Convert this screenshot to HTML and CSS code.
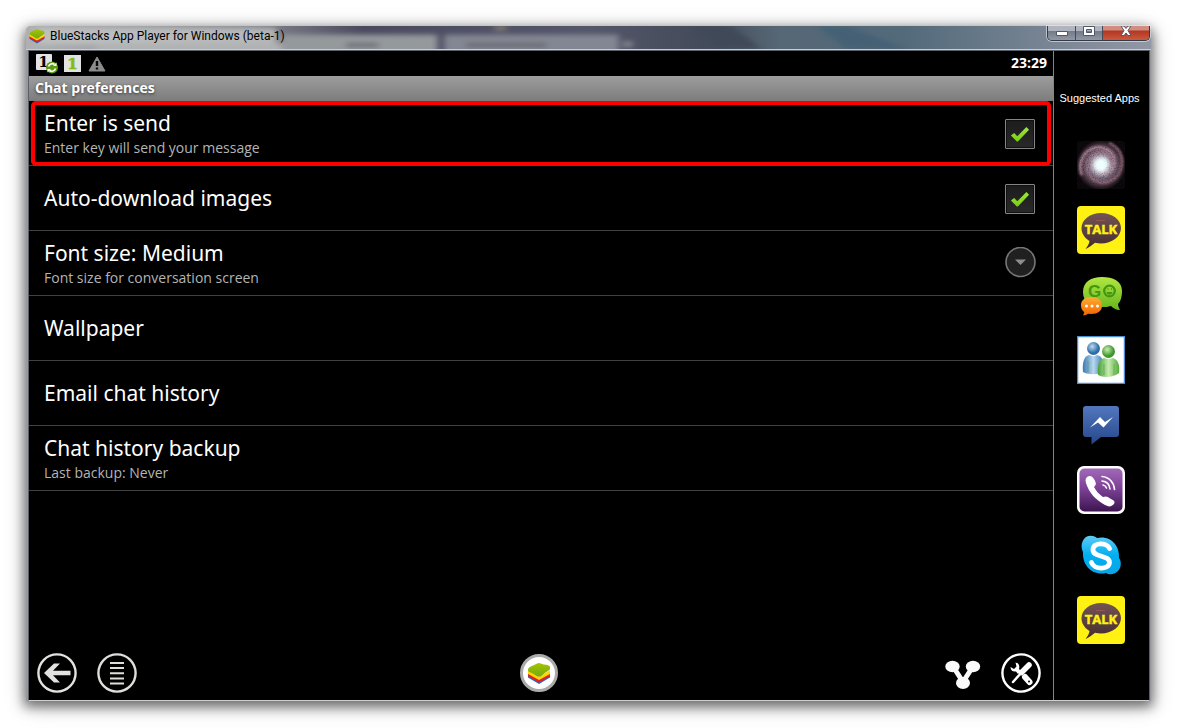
FILE: index.html
```
<!DOCTYPE html>
<html lang="en">
<head>
<meta charset="utf-8">
<title>BlueStacks App Player for Windows (beta-1)</title>
<link rel="stylesheet" href="styles.css">
</head>
<body>
<svg class="defs" aria-hidden="true">
  <defs>
    <linearGradient id="lime" x1="0" y1="0" x2="0" y2="1"><stop offset="0" stop-color="#a5c400"/><stop offset="1" stop-color="#72a912"/></linearGradient>
    <linearGradient id="check" x1="0" y1="0" x2="0" y2="1"><stop offset="0" stop-color="#9be83b"/><stop offset="1" stop-color="#7ccc12"/></linearGradient>
    <linearGradient id="brown" x1="0" y1="0" x2="0" y2="1"><stop offset="0" stop-color="#735454"/><stop offset="1" stop-color="#432c2e"/></linearGradient>
    <symbol id="stack" viewBox="0 0 26 24">
      <path d="M1 14v3l12 7 12-7v-4l-12 7z" fill="#1d70b7"/>
      <path d="M1 11.500v4l12 7 12-7v-4l-12 7z" fill="#e1202b"/>
      <path d="M1 9v4l12 6.500L25 13V9l-12 7z" fill="#ffd500"/>
      <path d="M1 8.500Q1 6.500 3 5.500L11 1.500q2-.8 4 0 3 1.500 6 1.500 3 .5 4 2v3q-2 2-5 3.500l-5 4q-2 1-4 0Q6 12 2 10.500 1 10 1 8.500z" fill="url(#lime)"/>
    </symbol>
    <symbol id="talk" viewBox="0 0 48 48">
      <rect width="48" height="48" rx="4" fill="#fff212"/>
      <path d="M24 7c11 0 20 6.500 20 15s-9 15.500-20 15.500c-2 0-4-.3-6-.7-3 2.500-6 5-9.500 6.200 2-2.500 3.500-5 4-8C7.500 32 4.500 27 4.500 22.500 4.500 13.500 13 7 24 7z" fill="url(#brown)"/>
      <path d="M19 14.500h9" stroke="#965454"/>
      <text x="24" y="28" text-anchor="middle" class="talk-text">TALK</text>
    </symbol>
  </defs>
</svg>

<div class="window">
  <header class="titlebar">
    <svg class="glass" viewBox="0 0 1124 24" preserveAspectRatio="none" aria-hidden="true">
      <defs>
        <filter id="soft" x="-10%" y="-50%" width="120%" height="200%"><feGaussianBlur stdDeviation="3"/></filter>
        <linearGradient id="sky"><stop offset="0" stop-color="#aeb0b1"/><stop offset=".08" stop-color="#a0a2a5"/><stop offset=".2" stop-color="#85878f"/><stop offset=".3" stop-color="#494a5e"/><stop offset=".5" stop-color="#54566a"/><stop offset=".6" stop-color="#444b5a"/><stop offset=".67" stop-color="#566775"/><stop offset=".78" stop-color="#526a7a"/><stop offset=".9" stop-color="#768392"/><stop offset="1" stop-color="#9297a4"/></linearGradient>
      </defs>
      <rect width="1124" height="24" fill="url(#sky)"/>
      <g filter="url(#soft)">
        <rect x="10" y="2" width="240" height="17" fill="#c3c4c4" opacity=".8"/>
        <rect x="70" y="18" width="190" height="12" fill="#b0b2b3"/>
        <rect x="255" y="9" width="156" height="22" fill="#94999c"/>
        <rect x="418" y="9" width="174" height="22" fill="#838793"/>
        <path d="M320 20h32M440 20h80" stroke="#62656d" stroke-width="4"/>
        <path d="M468 2h12" stroke="#857e72" stroke-width="5"/>
        <path d="M596 19h10" stroke="#858891" stroke-width="6"/>
        <path d="M705 0l30 24h-50L670 0z" fill="#414858"/>
        <path d="M820 0l60 24h-60L790 0z" fill="#456074"/>
      </g>
    </svg>
    <svg class="title-logo" aria-hidden="true"><use href="#stack"/></svg>
    <h1 class="title">BlueStacks App Player for Windows (beta-1)</h1>
    <div class="controls">
      <button class="control" aria-label="Minimize"><svg width="12" height="12" viewBox="0 0 12 12"><path d="M.5 5.500h11v4H.5z" fill="#fff" stroke="#51586a"/></svg></button>
      <button class="control" aria-label="Maximize"><svg width="12" height="12" viewBox="0 0 12 12"><path fill-rule="evenodd" d="M.5 .5h11v9H.5zM3.500 3.500v3h5v-3z" fill="#fff" stroke="#51586a"/></svg></button>
      <button class="control control-close" aria-label="Close"><svg width="12" height="12" viewBox="0 0 12 12"><path d="M1 0h3l2 2.500L8 0h3L8 4.500l3 5H8L6 7 4 9.500H1l3-5z" fill="#fff" stroke="#525866"/></svg></button>
    </div>
  </header>

  <div class="content">
    <main class="player">
      <div class="status">
        <svg width="22" height="21" viewBox="0 0 22 21" aria-hidden="true">
          <rect x="0" y="1" width="16" height="16" rx="1" fill="#e2e4e5"/>
          <text x="7.500" y="14" text-anchor="middle" class="badge-one">1</text>
          <circle cx="16" cy="14.500" r="6" fill="#5b9e0f"/>
          <path d="M12.500 13.500a3.800 3.800 0 0 1 6-2M19.500 15.500a3.800 3.800 0 0 1-6 2" fill="none" stroke="#fff" stroke-width="1.600"/>
          <path d="M17 13h3.500V9.500zM15 16h-3.500v3.500z" fill="#fff"/>
        </svg>
        <svg width="17" height="17" viewBox="0 0 17 17" aria-hidden="true">
          <rect width="17" height="17" fill="#e0e3e2"/>
          <text x="8.500" y="14" text-anchor="middle" class="badge-one badge-lime">1</text>
        </svg>
        <svg width="20" height="16" viewBox="-1 0 20 16" aria-hidden="true">
          <path d="M9 1l8 14H1z" fill="#8c8c8c" stroke="#8c8c8c" stroke-linejoin="round"/>
          <path d="M9 5v5M9 11.500v2" stroke="#080808" stroke-width="2.400"/>
        </svg>
        <time class="clock">23:29</time>
      </div>
      <h2 class="heading">Chat preferences</h2>
      <ul class="prefs">
        <li class="pref pref-marked">
          <label class="pref-text" for="enter-send"><span class="pref-name">Enter is send</span><span class="pref-note">Enter key will send your message</span></label>
          <span class="check"><input id="enter-send" type="checkbox" checked><svg viewBox="0 0 18 15" aria-hidden="true"><path d="M.5 9l3-2.500 3 3L15 1l2.500 2.500-10.500 11H6z" fill="url(#check)"/></svg></span>
        </li>
        <li class="pref">
          <label class="pref-text" for="auto-images"><span class="pref-name">Auto-download images</span></label>
          <span class="check"><input id="auto-images" type="checkbox" checked><svg viewBox="0 0 18 15" aria-hidden="true"><path d="M.5 9l3-2.500 3 3L15 1l2.500 2.500-10.500 11H6z" fill="url(#check)"/></svg></span>
        </li>
        <li class="pref">
          <button class="pref-button">
            <span class="pref-text"><span class="pref-name">Font size: Medium</span><span class="pref-note">Font size for conversation screen</span></span>
            <svg class="more" width="32" height="32" viewBox="0 0 32 32" aria-hidden="true"><circle cx="15.500" cy="15" r="14.500" fill="#202020" stroke="#777" stroke-width="1.600"/><path d="M10 12.500h11L15.500 18z" fill="#8d8d8d"/></svg>
          </button>
        </li>
        <li class="pref"><button class="pref-button"><span class="pref-text"><span class="pref-name">Wallpaper</span></span></button></li>
        <li class="pref"><button class="pref-button"><span class="pref-text"><span class="pref-name">Email chat history</span></span></button></li>
        <li class="pref"><button class="pref-button"><span class="pref-text"><span class="pref-name">Chat history backup</span><span class="pref-note">Last backup: Never</span></span></button></li>
      </ul>
      <nav class="dock">
        <div class="dock-side">
          <button class="dock-button" aria-label="Back"><svg width="40" height="40" viewBox="0 0 40 40"><circle cx="20" cy="20" r="18.600" fill="none" stroke="#e2e2df" stroke-width="2.400"/><path d="M7 20l10-9.500h6L16 17.800h17.500v4.400H16l7 7.300h-6z" fill="#e2e2df"/></svg></button>
          <button class="dock-button" aria-label="Menu"><svg width="40" height="40" viewBox="0 0 40 40"><circle cx="20" cy="20" r="18.600" fill="none" stroke="#dededb" stroke-width="2.400"/><path d="M13 10h14M13 15h14M13 20.300h14M13 25.500h14M13 30.500h14" stroke="#dededb" stroke-width="2"/></svg></button>
        </div>
        <button class="dock-button" aria-label="Home"><svg width="40" height="40" viewBox="0 0 40 40"><circle cx="20" cy="20" r="17.500" fill="#fff" stroke="#aaa" stroke-width="3"/><use href="#stack" x="7" y="9" width="26" height="22"/></svg></button>
        <div class="dock-side dock-end">
          <button class="dock-button" aria-label="Share"><svg width="38" height="40" viewBox="0 0 38 40"><g fill="#fafafa"><ellipse cx="9.500" cy="13.500" rx="7.200" ry="5.800"/><ellipse cx="30" cy="13.500" rx="7.200" ry="5.800"/><ellipse cx="20" cy="30" rx="7" ry="6"/></g><path d="M11 15l9 14 9-14" fill="none" stroke="#fafafa" stroke-width="5"/></svg></button>
          <button class="dock-button" aria-label="Settings"><svg width="40" height="40" viewBox="0 0 40 40"><circle cx="20" cy="20" r="18.600" fill="none" stroke="#fff" stroke-width="2.400"/><path d="M12 29l9-10" stroke="#fff" stroke-width="2.500" stroke-linecap="round"/><path d="M20.500 19.500L28 12" stroke="#fff" stroke-width="5.500" stroke-linecap="round"/><path d="M14.500 9.500c3 .5 4.500 3 3.500 6.500l2 2-3 3-2-2.500c-3 .5-5.500-1-5.500-4.500l3.500 2 2.500-2.500z" fill="#fff"/><path d="M24 24l4.500 5" stroke="#fff" stroke-width="6" stroke-linecap="round"/><circle cx="28" cy="28.500" r="1" fill="#000"/></svg></button>
        </div>
      </nav>
    </main>

    <aside class="suggested">
      <h2 class="suggested-title">Suggested Apps</h2>
      <a class="app" href="#galaxy" aria-label="Galaxy wallpaper"><svg viewBox="0 0 48 48">
        <defs>
          <radialGradient id="core"><stop offset="0" stop-color="#f5ffff"/><stop offset=".2" stop-color="#d3d6e2"/><stop offset=".42" stop-color="#8f859a"/><stop offset=".75" stop-color="#56404d"/><stop offset="1" stop-color="#0c080b"/></radialGradient>
          <filter id="grain" x="0" y="0" width="100%" height="100%"><feTurbulence type="fractalNoise" baseFrequency=".8" numOctaves="2"/><feColorMatrix values="0 0 0 0 .02  0 0 0 0 .01  0 0 0 0 .02  3 0 0 0 -1.300"/></filter>
          <filter id="haze"><feGaussianBlur stdDeviation=".9"/></filter>
          <filter id="glow" x="-50%" y="-50%" width="200%" height="200%"><feGaussianBlur stdDeviation="2.500"/></filter>
        </defs>
        <rect width="48" height="48" rx="3" fill="#080608"/><circle cx="24" cy="24" r="25" fill="url(#core)"/>
        <g fill="none" filter="url(#haze)"><path d="M24 17c-7-1-10 6-7 11 5 8 18 6 20-4C40 10 25 3 14 8 4 13 1 25 5 34" stroke="#b98fa0" stroke-width="2.500"/><path d="M28 28c8-2 7-13 0-16-9-3-18 4-18 13 0 12 12 20 23 15 10-4 14-15 11-26C42 8 37 4 32 2" stroke="#a57686" stroke-width="2"/></g>
        <rect width="48" height="48" filter="url(#grain)" opacity=".4"/>
        <circle cx="24" cy="24" r="8" fill="#efffff" filter="url(#glow)"/>
      </svg></a>
      <a class="app" href="#talk-app" aria-label="KakaoTalk"><svg viewBox="0 0 48 48"><use href="#talk"/></svg></a>
      <a class="app" href="#go" aria-label="GO SMS"><svg viewBox="0 0 48 48">
        <defs><linearGradient id="go-green" x2="0" y2="1"><stop offset="0" stop-color="#b3e743"/><stop offset="1" stop-color="#65b51d"/></linearGradient><linearGradient id="go-orange" x2="0" y2="1"><stop offset="0" stop-color="#ffad32"/><stop offset="1" stop-color="#f26300"/></linearGradient></defs>
        <path d="M25 6c11 0 20 4 20 14 0 5-1 10-4 13 0 2 1 4 2 6-4 0-7-2-9-4-3 1-6 1-9 1C13 36 6 31 6 21S14 6 25 6z" fill="url(#go-green)"/>
        <text x="11" y="26" class="go-text">G</text><circle cx="32.500" cy="20" r="5.300" fill="none" stroke="#459711" stroke-width="2.300"/>
        <path d="M29.500 21c1 3.500 5 3.500 6 0z" fill="#459711"/><path d="M30.500 18h1M34 18h1" stroke="#459711" stroke-width="1.500"/>
        <path d="M14 26c7 0 11 3 11 8.500S21 43 14 43l-3-.2c-1.500 1.200-3 1.700-5 1.700l1.300-3.200C5 39.500 4 37 4 34.500 4 29 8 26 14 26z" fill="url(#go-orange)"/>
        <g fill="#fff"><circle cx="9.500" cy="35" r="1.500"/><circle cx="15" cy="35" r="1.500"/><circle cx="20.500" cy="35" r="1.500"/></g>
      </svg></a>
      <a class="app" href="#messenger" aria-label="Messenger"><svg viewBox="0 0 48 48">
        <defs><linearGradient id="blue-man"><stop offset="0" stop-color="#3b79b0"/><stop offset=".5" stop-color="#b9d8ed"/><stop offset="1" stop-color="#3475b0"/></linearGradient><linearGradient id="green-man"><stop offset="0" stop-color="#459f36"/><stop offset=".5" stop-color="#c5ecae"/><stop offset="1" stop-color="#52aa39"/></linearGradient><radialGradient id="blue-head" cx=".4" cy=".35"><stop offset="0" stop-color="#bddcf0"/><stop offset="1" stop-color="#2c6da7"/></radialGradient><radialGradient id="green-head" cx=".4" cy=".35"><stop offset="0" stop-color="#caedb2"/><stop offset="1" stop-color="#3d982e"/></radialGradient></defs>
        <rect x=".5" y=".5" width="47" height="47" fill="#fff" stroke="#4991d1" stroke-width="1.500"/>
        <path d="M6 36c-1-9 1-16 6-17 3 1.500 6 1.500 8 0 6 1 7 8 7 17-6 3-16 3-21 0z" fill="url(#blue-man)"/><circle cx="16.500" cy="12.500" r="6.500" fill="url(#blue-head)"/>
        <path d="M21 39c-1-9 1-16 6-17 3 1.500 6 1.500 9 0 6 2 7 9 6 15l-3 2c-6 2.500-13 2.500-18 0z" fill="url(#green-man)"/><circle cx="31.500" cy="15.500" r="6.500" fill="url(#green-head)"/>
        <path d="M11 25v11M27 28v11M37 28v11" stroke="#33823a" stroke-width=".7" opacity=".6"/>
      </svg></a>
      <a class="app" href="#facebook" aria-label="Facebook Messenger"><svg viewBox="0 0 48 48">
        <defs><linearGradient id="fb" x2="0" y2="1"><stop offset="0" stop-color="#5277bd"/><stop offset="1" stop-color="#26478a"/></linearGradient></defs>
        <path d="M9 5h30q3 0 3 3v25q0 3-3 3H24l-9.500 7.500V36H9q-3 0-3-3V8q0-3 3-3z" fill="url(#fb)"/>
        <path d="M13 26.500l10-10.500 5 5 8-5-9.500 10.500-5.500-5z" fill="#fff"/>
      </svg></a>
      <a class="app" href="#viber" aria-label="Viber"><svg viewBox="0 0 48 48">
        <defs><linearGradient id="vb" x2="0" y2="1"><stop offset="0" stop-color="#a268b8"/><stop offset=".48" stop-color="#7b4095"/><stop offset="1" stop-color="#3c154f"/></linearGradient></defs>
        <rect width="48" height="48" rx="7" fill="#fff"/><rect x="2.500" y="2.500" width="43" height="43" rx="5" fill="url(#vb)"/>
        <path d="M10 11c3-2 5-1 7 2 2 4 3 5 0 8 2 4 5 7 9 10 3-1 4-1 8 2 4 2 4 3 3 5-3 3-5 3-9 1C19 34 12 27 9 17c-.8-3-.5-4.500 1-6z" fill="#fff"/>
        <path d="M25 10.500c7 .5 12 6 12.500 13M25 15c5 .5 7.500 3 8 8M26 19c2 .4 3 1.500 3.500 3" fill="none" stroke="#fff" stroke-width="1.600" stroke-linecap="round"/>
      </svg></a>
      <a class="app" href="#skype" aria-label="Skype"><svg viewBox="0 0 48 48">
        <defs><linearGradient id="sk" x2="0" y2="1"><stop offset="0" stop-color="#5fcbf6"/><stop offset=".5" stop-color="#00aff0"/><stop offset="1" stop-color="#0aa5e8"/></linearGradient></defs>
        <path d="M7 8c3-4 9-4 13-1C32 4 43 13 42 27c3 4 2 10-1 13-4 4-9 4-12 2C16 45 5 35 6 21 4 17 4 12 7 8z" fill="url(#sk)"/>
        <path d="M32.500 17.500C30 11 15.500 11 16 19c.5 8 16.500 4.500 16.500 12.500C32 39 17 39 14.500 31.500" fill="none" stroke="#fff" stroke-width="4.800" stroke-linecap="round"/>
      </svg></a>
      <a class="app" href="#talk-app" aria-label="KakaoTalk"><svg viewBox="0 0 48 48"><use href="#talk"/></svg></a>
    </aside>
  </div>
</div>
</body>
</html>
```
FILE: styles.css
```
* { box-sizing: border-box; }
body {
  margin: 0;
  min-height: 100vh;
  display: flex;
  padding: 26px 27px 27px 26px;
  background: #fff;
  font-family: "Open Sans", "Noto Sans", sans-serif;
}
h1, h2, ul { margin: 0; padding: 0; }
button { font: inherit; color: inherit; padding: 0; border: 0; background: none; text-align: left; cursor: pointer; }
svg { display: block; flex: none; }
.defs { position: absolute; width: 0; height: 0; }

.window {
  flex: 1;
  min-width: 0;
  display: flex;
  flex-direction: column;
  border-radius: 5px 5px 0 0;
  background: #97999e;
  box-shadow: 0 4px 12px 2px rgba(0, 0, 0, .5), 0 4px 24px rgba(0, 0, 0, .2);
}
.titlebar {
  position: relative;
  display: flex;
  align-items: center;
  height: 24px;
  padding: 0 1px 4px 3px;
  border-bottom: 1px solid #cbcdd1;
}
.glass { position: absolute; inset: 0; width: 100%; height: 100%; border-radius: 5px 5px 0 0; }
.title-logo { position: relative; width: 16px; height: 16px; }
.title {
  position: relative;
  flex: 1;
  margin-left: 5px;
  font: 12px/20px Roboto, "Open Sans", sans-serif;
  color: #000;
}
.controls {
  position: relative;
  align-self: flex-start;
  display: flex;
  height: 15px;
  border: 1px solid #343a46;
  border-top: 0;
  border-radius: 0 0 5px 5px;
  box-shadow: 0 0 0 1px rgba(235, 238, 244, .6);
  overflow: hidden;
}
.control {
  display: flex;
  width: 28px;
  justify-content: center;
  border-right: 1px solid #454c59;
  background: linear-gradient(#afb4c0 0 5px, #727987 5px, #9298a6);
}
.control:nth-child(2) { width: 27px; }
.control-close { width: 46px; border-right: 0; background: linear-gradient(#d38c80 0 4px, #b33722 5px, #ca583e); }

.content {
  flex: 1;
  display: flex;
  min-height: 0;
  margin: 0 1px 0 2px;
  border: 1px solid #5a5e66;
  border-bottom-color: #d0d0d0;
  background: #000;
  color: #fff;
}
.player { flex: 1; min-width: 0; display: flex; flex-direction: column; }
.status { display: flex; align-items: center; gap: 6px; height: 25px; padding: 0 6px 0 7px; }
.clock { margin-left: auto; font-size: 14px; line-height: 18px; font-weight: 700; padding-bottom: 2px; }
.badge-one { font: 700 15px "DejaVu Serif", serif; fill: #000; }
.badge-lime { fill: #83bb13; stroke: #83bb13; stroke-width: .5px; }
.heading {
  height: 25px;
  padding-left: 6px;
  background: linear-gradient(#9d9d9d, #7c7c7c);
  font-size: 14px;
  line-height: 23px;
  text-shadow: 0 1px 3px #333;
}
.prefs { list-style: none; }
.pref {
  position: relative;
  display: flex;
  align-items: center;
  height: 65px;
  padding: 0 16px 0 15px;
  border-bottom: 1px solid #414141;
}
.pref-marked::after {
  content: "";
  position: absolute;
  inset: 0 2px -1px 2px;
  border: 4px solid #f00;
  border-radius: 5px;
  pointer-events: none;
}
.pref-button { flex: 1; display: flex; align-items: center; align-self: stretch; }
.pref-text { flex: 1; display: flex; flex-direction: column; gap: 2px; }
.pref-name { font-family: "Noto Sans", "Open Sans", sans-serif; font-size: 21px; line-height: 28px; }
.pref-note { font-size: 14px; line-height: 18px; color: #b4b4b4; }
.check { display: grid; place-items: center; margin-right: 2px; padding-top: 2px; }
.check > * { grid-area: 1 / 1; }
.check input {
  appearance: none;
  width: 30px;
  height: 30px;
  margin: 0;
  border: 1px solid #858585;
  border-radius: 1px;
  background: linear-gradient(#1c1c1c, #292929);
  box-shadow: inset 0 0 0 1px #111;
}
.check svg { width: 20px; height: 16px; pointer-events: none; visibility: hidden; }
.check input:checked + svg { visibility: visible; }

.dock {
  margin-top: auto;
  display: grid;
  grid-template-columns: 1fr auto 1fr;
  align-items: center;
  padding: 0 12px 7px 8px;
}
.dock-side { display: flex; gap: 20px; }
.dock-end { justify-content: flex-end; }

.suggested {
  width: 96px;
  display: flex;
  flex-direction: column;
  align-items: center;
  gap: 17px;
  padding: 40px 2px 0 0;
  border-left: 1px solid #858585;
}
.suggested-title {
  margin: 0 2px 18px 0;
  font: 11px/15px "Liberation Sans", Arial, sans-serif;
  white-space: nowrap;
}
.app { width: 48px; height: 48px; }
.talk-text { font: 700 13px "Open Sans", sans-serif; fill: #fff212; stroke: #fff212; stroke-width: .5px; }
.go-text { font: 700 17px "Liberation Sans", sans-serif; fill: #459711; }
```
